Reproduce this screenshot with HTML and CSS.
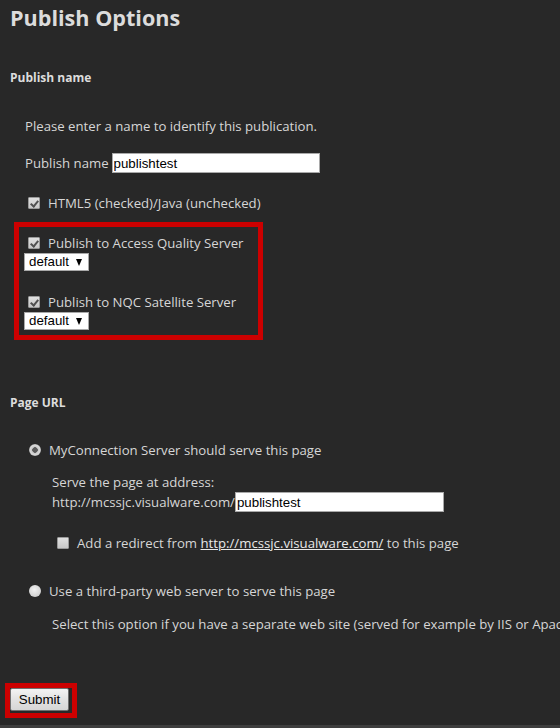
FILE: index.html
```html
<html>

<head>
    <meta http-equiv="Content-Type" content="text/html; charset=utf-8">
    <title>Publish Options</title>

    <link rel="stylesheet" href="styles.css">
</head>

<body>
    <h1 class="page-title">Publish Options</h1>

    <h2 class="section-title">Publish name</h2>
    <div class="section">
        <p class="note">Please enter a name to identify this publication.</p>

        <div class="field-row">
            <label for="pubname">Publish name</label>
            <input id="pubname" class="text-input name-input" type="text" value="publishtest">
        </div>

        <label class="check-row html5-row">
            <input type="checkbox" class="check" checked>
            <span>HTML5 (checked)/Java (unchecked)</span>
        </label>
    </div>

    <div class="highlight servers">
        <label class="check-row">
            <input type="checkbox" class="check" checked>
            <span>Publish to Access Quality Server</span>
        </label>
        <span class="select-wrap"><select class="drop"><option>default</option></select></span>

        <label class="check-row second">
            <input type="checkbox" class="check" checked>
            <span>Publish to NQC Satellite Server</span>
        </label>
        <span class="select-wrap"><select class="drop"><option>default</option></select></span>
    </div>

    <h2 class="section-title url-title">Page URL</h2>
    <div class="section">
        <label class="radio-row">
            <input type="radio" name="serve" class="radio" checked>
            <span>MyConnection Server should serve this page</span>
        </label>

        <div class="option-body">
            <div class="address-label">Serve the page at address:</div>
            <div class="address-row">
                <span>http://mcssjc.visualware.com/</span><input class="text-input url-input" type="text" value="publishtest">
            </div>
            <label class="check-row redirect-row">
                <input type="checkbox" class="check">
                <span>Add a redirect from <a href="#">http://mcssjc.visualware.com/</a> to this page</span>
            </label>
        </div>

        <label class="radio-row third-party">
            <input type="radio" name="serve" class="radio">
            <span>Use a third-party web server to serve this page</span>
        </label>

        <div class="option-body">
            <div class="hint">Select this option if you have a separate web site (served for example by IIS or Apache) and want to host this page there.</div>
        </div>
    </div>

    <div class="highlight submit-box">
        <button class="submit">Submit</button>
    </div>

    <div class="footer-bar"></div>
</body>

</html>
```

FILE: styles.css
```css
html {
    overflow: hidden;
}

body {
    margin: 0;
    padding: 0 10px;
    background: #282828;
    color: #d6d6d6;
    font-family: "Open Sans", "DejaVu Sans", sans-serif;
    font-size: 13.2px;
}

.page-title {
    margin: 4px 0 0 0;
    font-size: 21.6px;
    line-height: 28px;
    font-weight: bold;
    color: #dcdcdc;
}

.section-title {
    margin: 38px 0 0 0;
    font-size: 12px;
    line-height: 16px;
    font-weight: bold;
    color: #dcdcdc;
}

.url-title {
    margin-top: 55px;
}

.section {
    padding-left: 15px;
}

.note {
    margin: 30px 0 0 0;
    line-height: 20px;
}

.field-row {
    margin-top: 17px;
    display: flex;
    align-items: center;
    gap: 3px;
    height: 20px;
}

.text-input {
    box-sizing: border-box;
    height: 20px;
    border: 1px solid #a9a9a9;
    background: white;
    color: black;
    font-family: "Liberation Sans", Arial, sans-serif;
    font-size: 13.3px;
    padding: 0 1px;
    margin: 0;
    outline: none;
}

.name-input {
    width: 208px;
}

.url-input {
    width: 209px;
}

/* checkbox / radio rows */

.check-row,
.radio-row {
    display: flex;
    align-items: center;
    line-height: 20px;
    height: 20px;
}

.html5-row {
    margin-top: 20px;
}

.check,
.radio {
    appearance: none;
    -webkit-appearance: none;
    box-sizing: border-box;
    width: 12px;
    height: 12px;
    margin: 0 8px 0 3px;
    position: relative;
    flex: none;
}

.check {
    background: linear-gradient(#e0e0e0, #c8c8c8);
    border: 1px solid #9a9a9a;
    border-radius: 1px;
}

.check:checked::after {
    content: "";
    position: absolute;
    left: 3px;
    top: 1px;
    width: 3px;
    height: 6px;
    border: solid #505050;
    border-width: 0 2px 2px 0;
    transform: rotate(40deg);
}

.radio {
    border-radius: 50%;
    background: radial-gradient(circle at 45% 40%, #f2f2f2, #c4c4c4);
    margin-left: 4px;
}

.radio:checked {
    background: radial-gradient(circle, #5a5a5a 0 2.5px, #c8c8c8 3px, #d8d8d8 5px, #a8a8a8 6px);
}

/* red highlight boxes */

.highlight {
    border: 5px solid #cc0000;
}

.servers {
    width: 249px;
    box-sizing: border-box;
    margin: 9px 0 0 4px;
    padding: 6px 5px 5px 5px;
}

.servers .check-row .check {
    margin-left: 4px;
}

.servers .second {
    margin-top: 21px;
}

.select-wrap {
    display: inline-block;
    position: relative;
    vertical-align: top;
}

.select-wrap::after {
    content: "";
    position: absolute;
    right: 7px;
    top: 6px;
    border-left: 3.5px solid transparent;
    border-right: 3.5px solid transparent;
    border-top: 7px solid black;
    pointer-events: none;
}

.drop {
    appearance: none;
    -webkit-appearance: none;
    box-sizing: border-box;
    width: 65px;
    height: 18px;
    margin: 0;
    padding: 0 0 0 4px;
    border: 1px solid #a9a9a9;
    border-radius: 0;
    background: white;
    color: black;
    font-family: "Liberation Sans", Arial, sans-serif;
    font-size: 13.3px;
    line-height: 16px;
}

/* page url */

.url-title + .section .radio-row:first-child {
    margin-top: 29px;
}

.option-body {
    padding-left: 27px;
}

.address-label {
    margin-top: 13px;
    line-height: 19px;
}

.address-row {
    display: flex;
    align-items: center;
    height: 20px;
}

.redirect-row {
    margin-top: 21px;
}

.redirect-row .check {
    margin-left: 5px;
}

.redirect-row a {
    color: #e8e8e8;
    text-decoration: underline;
}

.third-party {
    margin-top: 28px;
}

.hint {
    margin-top: 13px;
    line-height: 20px;
    white-space: nowrap;
}

.submit-box {
    display: inline-block;
    margin: 49px 0 0 -5px;
    padding: 0 3px 2px 0;
}

.submit {
    display: block;
    width: 59px;
    height: 23px;
    margin: 0;
    padding: 0;
    border: 1px solid #707070;
    border-radius: 2px;
    background: linear-gradient(#f3f3f3, #e2e2e2 50%, #d6d6d6);
    color: black;
    font-family: "Liberation Sans", Arial, sans-serif;
    font-size: 13.3px;
    cursor: pointer;
}

.footer-bar {
    margin: 7px -10px 0 -10px;
    height: 20px;
    background: #3e3e3e;
}
```
